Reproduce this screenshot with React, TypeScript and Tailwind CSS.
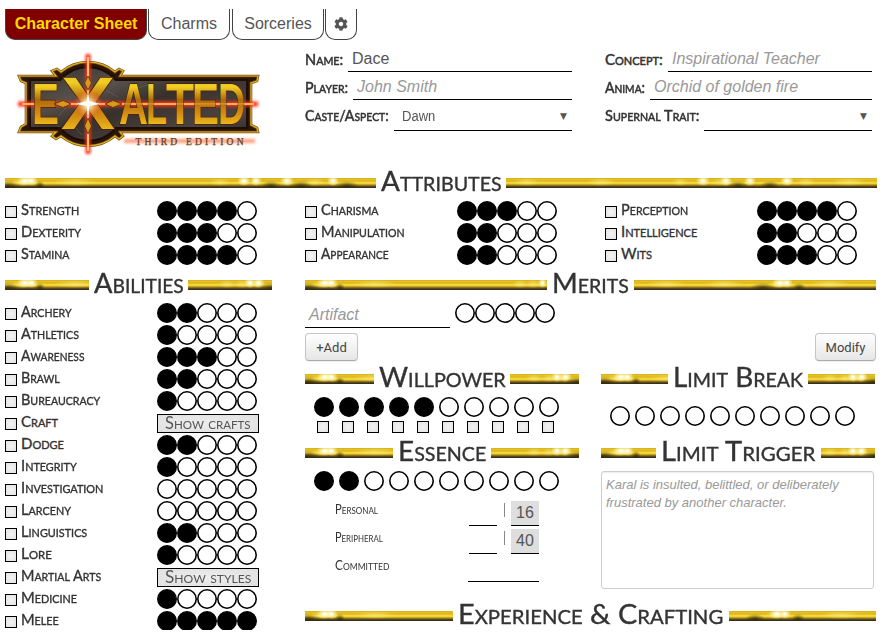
import { useLayoutEffect, useRef, useState } from "react";
import type { ReactNode } from "react";
import { FaCog } from "react-icons/fa";

/* Small-caps text squeezed or stretched to a given width. */
function Fit({ text, width, className = "" }: { text: string; width: number; className?: string }) {
  const ref = useRef<HTMLSpanElement>(null);
  const [scale, setScale] = useState(1);
  useLayoutEffect(() => {
    if (ref.current) setScale(width / ref.current.offsetWidth);
  }, [text, width]);
  return (
    <span className={`block shrink-0 whitespace-nowrap ${className}`} style={{ width }}>
      <span
        ref={ref}
        className="inline-block origin-left [font-variant-caps:small-caps]"
        style={{ transform: `scaleX(${scale})` }}
      >
        {text}
      </span>
    </span>
  );
}

type Glint = [x: number, width: number, tone?: "dark" | "soft"];

const START: Glint[] = [[-10, 26, "dark"], [6, 20, "soft"], [12, 16], [20, 13], [30, 10, "dark"], [48, 44, "soft"]];
const END: Glint[] = [[16, 18, "soft"], [32, 16, "soft"], [42, 12], [50, 13], [56, 26, "dark"]];

function Bar({ glints, end = false }: { glints: Glint[]; end?: boolean }) {
  return (
    <div className="relative h-[10px] flex-1 overflow-hidden bg-[linear-gradient(180deg,#cda81c_0%,#e6c324_12%,#dcb41c_30%,#fade40_48%,#f0d034_56%,#b8961c_68%,#6c581c_80%,#3a311a_92%,#3a311a_100%)]">
      {glints.map(([x, w, tone], i) => (
        <span
          key={i}
          className={`absolute ${
            tone === "dark"
              ? "top-[3px] h-[10px] bg-[radial-gradient(closest-side,rgba(48,40,8,0.8),transparent)]"
              : tone === "soft"
                ? "top-0 h-[8px] bg-[radial-gradient(closest-side,rgba(255,240,130,0.6),transparent)]"
                : "top-[-2px] h-[10px] bg-[radial-gradient(closest-side,#fffef0_15%,rgba(255,250,190,0.6)_55%,transparent)]"
          }`}
          style={end ? { right: 70 - x - w, width: w } : { left: x, width: w }}
        />
      ))}
    </div>
  );
}

function Heading({ text, box, width, left = START, right = END, rightFromEnd = true }: {
  text: string; box: number; width: number; left?: Glint[]; right?: Glint[]; rightFromEnd?: boolean;
}) {
  return (
    <h2 className="flex h-7 items-center">
      <Bar glints={left} />
      <span className="flex h-7 justify-center" style={{ width: box }}>
        <Fit text={text} width={width} className="text-[27px] leading-[24px] [-webkit-text-stroke:0.35px_#333]" />
      </span>
      <Bar glints={right} end={rightFromEnd} />
    </h2>
  );
}

function Dot({ on }: { on: boolean }) {
  return (
    <svg className="block size-5 shrink-0" viewBox="0 0 20 20">
      <circle cx="10" cy="10" r="9.2" fill={on ? "#000" : "#fff"} stroke="#000" strokeWidth="1.6" />
    </svg>
  );
}

function Dots({ value, count = 5, spaced = false }: { value: number; count?: number; spaced?: boolean }) {
  return (
    <div className={`flex ${spaced ? "gap-[5px]" : ""}`}>
      {Array.from({ length: count }, (_, i) => <Dot key={i} on={i < value} />)}
    </div>
  );
}

function Check() {
  return <span className="block size-3 shrink-0 border border-black bg-[radial-gradient(#f4f4f4,#e2e2e2)]" />;
}

function Trait({ name, width, value }: { name: string; width: number; value: number | string }) {
  return (
    <div className="flex h-[22px] items-start">
      <div className="flex w-[152px] items-start gap-1">
        <span className="pt-[5px]"><Check /></span>
        <Fit text={name} width={width} className="text-[15px] leading-[17px] [-webkit-text-stroke:0.35px_#333]" />
      </div>
      {typeof value === "number" ? (
        <Dots value={value} />
      ) : (
        <button className="mt-px flex h-[19px] w-[102px] justify-center border border-black bg-[radial-gradient(#eeeeee,#e0e0e0)] text-[#555]">
          <Fit text={value} width={86} className="text-[17px] leading-[16px]" />
        </button>
      )}
    </div>
  );
}

function Field({ label, width, tall = false, children }: { label: string; width: number; tall?: boolean; children?: ReactNode }) {
  return (
    <div className={`flex items-stretch gap-[5px] ${tall ? "h-[31px]" : "h-7"}`}>
      <Fit text={label} width={width} className="pt-[7px] text-[15px] leading-[17px] [-webkit-text-stroke:0.5px_#333]" />
      <div className="flex-1 border-b border-black pl-1 font-['Liberation_Sans',sans-serif]">{children}</div>
    </div>
  );
}

function Select({ value = "" }: { value?: string }) {
  return (
    <div className="flex justify-between pr-[5px] pl-1 pt-[7px] text-[14px] leading-[19px] text-[#555]">
      <span className="inline-block origin-left scale-x-[0.93]">{value}</span>
      <span className="font-['DejaVu_Sans'] text-[9px]">▼</span>
    </div>
  );
}

function Placeholder({ children }: { children: ReactNode }) {
  return <div className="pt-[5px] text-[16px] leading-5 text-[#999] italic">{children}</div>;
}

const PLATE =
  "M19 76 H56 L52 71 L57 69 L61 72 A42 42 0 0 1 115 72 L119 69 L123 71 L120 76 H258 L257 81 L251 83 V125 L257 128 L258 132 H120 L123 136 L119 139 L115 136 A42 42 0 0 1 61 136 L56 139 L52 136 L56 132 H19 L21 127 L26 124 V83 L21 81 Z";

const LETTERS: [string, number, number][] = [
  ["E", 32, 27], ["A", 119, 29], ["L", 146, 21], ["T", 166, 28], ["E", 192, 27], ["D", 218, 27],
];

function Logo() {
  return (
    <svg className="block h-[120px] w-[270px]" viewBox="0 40 270 120">
      <defs>
        <linearGradient id="gold" x1="0" y1="0" x2="0" y2="1">
          <stop offset="0" stopColor="#d9a51a" />
          <stop offset=".25" stopColor="#f2cf25" />
          <stop offset=".45" stopColor="#b06a0c" />
          <stop offset=".65" stopColor="#d18a12" />
          <stop offset=".85" stopColor="#f0bf1c" />
          <stop offset="1" stopColor="#ffd82a" />
        </linearGradient>
        <linearGradient id="plate" x1="0" y1="0" x2="1" y2="1">
          <stop offset="0" stopColor="#36302d" />
          <stop offset=".3" stopColor="#57504b" />
          <stop offset=".5" stopColor="#37302c" />
          <stop offset=".8" stopColor="#4c4541" />
          <stop offset="1" stopColor="#2a2421" />
        </linearGradient>
        <radialGradient id="flare">
          <stop offset="0" stopColor="#fff" />
          <stop offset=".35" stopColor="#ffd9a0" stopOpacity=".75" />
          <stop offset="1" stopColor="#ff3a10" stopOpacity="0" />
        </radialGradient>
        <filter id="soft" x="-20%" y="-300%" width="140%" height="700%">
          <feGaussianBlur stdDeviation="1.7" />
        </filter>
        <filter id="softV" x="-300%" y="-20%" width="700%" height="140%">
          <feGaussianBlur stdDeviation="1.7" />
        </filter>
      </defs>
      {/* name plate with its round boss */}
      <path d={PLATE} fill="#2a1507" stroke="#7a4a10" strokeWidth="2.6" />
      <path d={PLATE} fill="none" stroke="#dcb424" strokeWidth="1.2" />
      <path d="M30 80 H60 A37 37 0 0 1 116 80 H247 V128 H116 A37 37 0 0 1 60 128 H30 Z" fill="url(#plate)" stroke="#1c0d05" strokeWidth="2" />
      <path
        d="M42 118 L60 127 M66 108 L58 116 M106 90 L118 97 M132 90 L150 84 M202 118 L215 126 M228 84 L240 92 M76 128 L82 135 M148 126 L166 120"
        stroke="#7d756f" strokeWidth=".7" opacity=".55"
      />
      <rect x="18" y="101.500" width="240" height="5" fill="#ff3515" filter="url(#soft)" />
      <rect x="85.500" y="54" width="5" height="100" fill="#ff3515" filter="url(#softV)" />
      <rect x="22" y="103" width="232" height="2" fill="#ffb060" />
      <rect x="87" y="57" width="2" height="94" fill="#ffc075" />
      {/* lettering */}
      <g fontFamily="'Liberation Sans', sans-serif" fontWeight="700" fill="url(#gold)" stroke="#4a2205" strokeWidth="1.6" paintOrder="stroke">
        {LETTERS.map(([letter, x, width]) => (
          <text key={x} x={x} y="123.500" fontSize="58" textLength={width} lengthAdjust="spacingAndGlyphs">{letter}</text>
        ))}
        <text x="61" y="128.500" fontSize="74" textLength="54" lengthAdjust="spacingAndGlyphs">X</text>
      </g>
      <rect x="122" y="103.400" width="124" height="1" fill="#ffae50" opacity=".7" />
      {/* four-pointed star */}
      <path
        d="M88 76 L91.500 83 L88 90 L84.500 83 Z M88 118 L91.500 126 L88 134 L84.500 126 Z M54 104 L63 100.500 L71 104 L63 107.500 Z M105 104 L113 100.500 L122 104 L113 107.500 Z"
        fill="#d99a1c" stroke="#5b2a08" strokeWidth=".8"
      />
      <circle cx="88" cy="104" r="15" fill="url(#flare)" />
      <path d="M88 92 L89.500 101 L100 104 L89.500 106 L88 117 L86.500 106 L76 104 L86.500 101 Z" fill="#fff" />
      {/* subtitle */}
      <rect x="124" y="139" width="131" height="4" fill="#ff7a50" opacity=".75" filter="url(#soft)" />
      <text x="135.500" y="144.800" fontFamily="'Liberation Serif', serif" fontSize="9.500" fill="#5f3f16" stroke="#5f3f16" strokeWidth=".25" textLength="108">THIRD EDITION</text>
    </svg>
  );
}

const ATTRIBUTES: [string, number, number][][] = [
  [["Strength", 58, 4], ["Dexterity", 60, 3], ["Stamina", 48, 4]],
  [["Charisma", 57, 3], ["Manipulation", 84, 2], ["Appearance", 68, 2]],
  [["Perception", 67, 4], ["Intelligence", 76, 2], ["Wits", 31, 3]],
];

const ABILITIES: [string, number, number | string][] = [
  ["Archery", 51, 2], ["Athletics", 58, 1], ["Awareness", 63, 3], ["Brawl", 39, 2],
  ["Bureaucracy", 79, 1], ["Craft", 37, "Show crafts"], ["Dodge", 43, 2], ["Integrity", 56, 1],
  ["Investigation", 82, 0], ["Larceny", 50, 0], ["Linguistics", 66, 2], ["Lore", 31, 1],
  ["Martial Arts", 80, "Show styles"], ["Medicine", 56, 1], ["Melee", 38, 5],
];

const POOLS: [string, number, string][] = [["Personal", 43, "16"], ["Peripheral", 48, "40"]];

const ATTR_LEFT: Glint[] = [...START, [205, 20, "soft"], [232, 14], [245, 12], [256, 20, "dark"], [275, 14], [284, 24, "dark"], [300, 20, "soft"], [322, 12], [330, 24, "dark"]];
const ATTR_RIGHT: Glint[] = [[8, 26, "soft"], [80, 30, "soft"], [165, 18, "soft"], [190, 14], [204, 24, "soft"], [214, 12], [222, 20, "dark"], [238, 12], [254, 20, "dark"], [274, 14], [290, 20, "soft"], [325, 36, "soft"]];
const RESTART: Glint[] = [[12, 40, "soft"], [70, 40, "soft"], [116, 26, "dark"], [134, 20, "soft"], [138, 16], [147, 12], [158, 14, "dark"], [176, 40, "soft"]];
const BUTTON = "h-7 rounded border border-[#c4c4c4] border-b-[#aaa] bg-linear-to-b from-white to-[#e6e6e6] font-['Roboto'] text-[13px] leading-[25px] text-[#444] shadow-[0_1px_1px_rgba(0,0,0,0.06)]";
const TAB = "flex h-[31px] items-center justify-center rounded-b-[10px] border border-t-0 border-[#444] pb-px text-[16px]";

export default function App() {
  return (
    <div className="h-[630px] w-[883px] overflow-hidden bg-white pt-[9px] pl-[5px] font-['Lato',sans-serif] text-[#333]">
      <nav className="flex gap-px font-['Liberation_Sans',sans-serif] text-[#555]">
        <div className={`${TAB} w-[142px] bg-[#800000] font-bold text-[#ffd700]`}>Character Sheet</div>
        <div className={`${TAB} w-[82px]`}>Charms</div>
        <div className={`${TAB} ml-px w-[92px]`}>Sorceries</div>
        <div className={`${TAB} w-8`}><FaCog className="size-[14px]" /></div>
      </nav>

      <header className="flex h-[129px]">
        <div className="w-[300px]"><div className="-ml-[5px]"><Logo /></div></div>
        <div className="w-[267px] pt-1">
          <Field label="Name:" width={38}><div className="pt-[5px] text-[16px] leading-5 text-[#555]">Dace</div></Field>
          <Field label="Player:" width={43}><Placeholder>John Smith</Placeholder></Field>
          <Field label="Caste/Aspect:" width={84} tall><Select value="Dawn" /></Field>
        </div>
        <div className="ml-[33px] w-[267px] pt-1">
          <Field label="Concept:" width={58}><Placeholder>Inspirational Teacher</Placeholder></Field>
          <Field label="Anima:" width={40}><Placeholder>Orchid of golden fire</Placeholder></Field>
          <Field label="Supernal Trait:" width={94} tall><Select /></Field>
        </div>
      </header>

      <div className="w-[872px]">
        <Heading text="Attributes" box={130} width={121} left={ATTR_LEFT} right={ATTR_RIGHT} rightFromEnd={false} />
      </div>
      <section className="mt-1 flex h-[70px]">
        {ATTRIBUTES.map((column, i) => (
          <div key={i} className="w-[300px] shrink-0 last:w-[270px]">
            {column.map(([name, width, value]) => <Trait key={name} name={name} width={width} value={value} />)}
          </div>
        ))}
      </section>

      <main className="flex">
        <section className="mr-[33px] w-[267px]">
          <Heading text="Abilities" box={99} width={90} />
          <div className="mt-1">
            {ABILITIES.map(([name, width, value]) => <Trait key={name} name={name} width={width} value={value} />)}
          </div>
        </section>

        <section className="w-[571px]">
          <Heading text="Merits" box={87} width={77} left={[...START, [207, 16, "soft"], [220, 16, "soft"], [233, 9]]} right={RESTART} rightFromEnd={false} />
          <div className="flex items-start gap-[5px] pt-1">
            <div className="h-[25px] w-[145px] border-b border-black pl-1 pt-[2px] font-['Liberation_Sans'] text-[16px] leading-5 text-[#999] italic">Artifact</div>
            <Dots value={0} />
          </div>
          <div className="mt-[5px] flex justify-between">
            <button className={`${BUTTON} w-[53px]`}>+Add</button>
            <button className={`${BUTTON} w-[61px]`}>Modify</button>
          </div>

          <div className="mt-1 flex gap-[22px]">
            <div className="w-[274px]">
              <Heading text="Willpower" box={136} width={127} />
              <div className="mt-1 pl-[9px]"><Dots value={5} count={10} spaced /></div>
              <div className="mt-1 flex gap-[13px] pl-3">
                {Array.from({ length: 10 }, (_, i) => <Check key={i} />)}
              </div>
              <div className="mt-[6px]"><Heading text="Essence" box={98} width={88} /></div>
              <div className="mt-1 pl-[9px]"><Dots value={2} count={10} spaced /></div>
              <div className="pt-[10px] pl-[30px]">
                {POOLS.map(([name, width, total]) => (
                  <div key={name} className="flex h-7 items-start">
                    <div className="w-[134px]">
                      <Fit text={name} width={width} className="text-[12.5px] leading-[18px]" />
                    </div>
                    <div className="h-[25px] w-7 border-b border-black" />
                    <div className="flex w-[14px] justify-center pt-[2px]"><span className="h-[14px] w-px bg-[#888]" /></div>
                    <div className="h-[25px] w-7 border-b border-black bg-[#dedede] text-center font-['Liberation_Sans'] text-[16px] leading-[24px] text-[#555]">{total}</div>
                  </div>
                ))}
                <div className="flex h-7 items-start">
                  <div className="w-[133px]"><Fit text="Committed" width={54} className="text-[12.5px] leading-[18px]" /></div>
                  <div className="h-[25px] w-[71px] border-b border-black" />
                </div>
              </div>
            </div>

            <div className="-mr-px w-[274px]">
              <Heading text="Limit Break" box={140} width={130} />
              <div className="mt-[13px] pl-[9px]"><Dots value={0} count={10} spaced /></div>
              <div className="mt-[13px]">
                <Heading text="Limit Trigger" box={165} width={154} />
              </div>
              <div className="mt-[4px] h-[118px] w-[273px] rounded-[3px] border border-[#ccc] px-1 pt-1 font-['Liberation_Sans'] text-[13px] leading-[18px] text-[#999] italic shadow-[inset_0_1px_1px_rgba(0,0,0,0.07)]">
                Karal is insulted, belittled, or deliberately frustrated by another character.
              </div>
            </div>
          </div>

          <div className="mt-[13px]">
            <Heading text="Experience & Crafting" box={276} width={265} right={[[16, 20, "dark"], [36, 20, "soft"], [40, 16], [50, 12], [62, 14, "dark"], [90, 44, "soft"]]} rightFromEnd={false} />
          </div>
        </section>
      </main>
    </div>
  );
}
